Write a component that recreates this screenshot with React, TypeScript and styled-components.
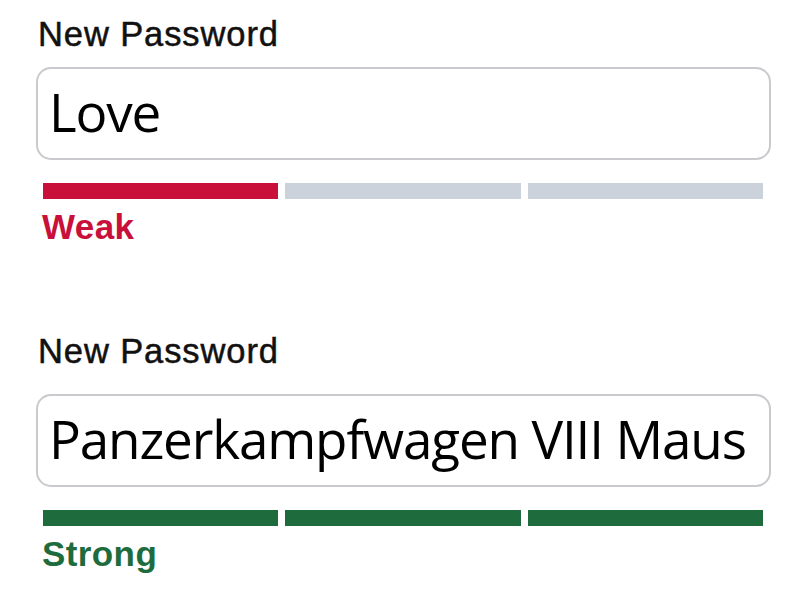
import React from "react";
import styled, { createGlobalStyle } from "styled-components";

const GlobalStyle = createGlobalStyle`
  html, body {
    margin: 0;
    padding: 0;
    background: #ffffff;
  }
`;

type Strength = "weak" | "strong";

const COLORS: Record<Strength, string> = {
  weak: "#c8103a",
  strong: "#1e6c3d",
};

const LEVELS: Record<Strength, number> = {
  weak: 1,
  strong: 3,
};

const Page = styled.div`
  width: 800px;
  height: 600px;
  box-sizing: border-box;
  padding: 16px 29px 0 36px;
  display: flex;
  flex-direction: column;
  gap: 88px;
  font-family: "Liberation Sans", Arial, sans-serif;
`;

const Field = styled.div`
  display: flex;
  flex-direction: column;
`;

const Label = styled.label<{ $gap: number }>`
  display: block;
  font-size: 34.5px;
  line-height: 36px;
  letter-spacing: 0.9px;
  color: #111;
  -webkit-text-stroke: 0.5px #111;
  padding-left: 2px;
  margin-bottom: ${(p) => p.$gap}px;
`;

const Input = styled.input`
  box-sizing: border-box;
  width: 735px;
  height: 93px;
  border: 2px solid #c9c9ce;
  border-radius: 15px;
  padding: 0 0 5px 11px;
  font-family: "Open Sans", "Noto Sans", sans-serif;
  font-size: 53px;
  letter-spacing: -1.15px;
  color: #000;
  background: #fff;
  outline: none;
`;

const Meter = styled.div`
  display: grid;
  grid-template-columns: repeat(3, 1fr);
  gap: 7px;
  margin: 23px 8px 0 7px;
`;

const Segment = styled.div<{ $color: string }>`
  height: 16px;
  background: ${(p) => p.$color};
`;

const Status = styled.div<{ $color: string }>`
  margin-top: 10px;
  padding-left: 6px;
  font-size: 35px;
  line-height: 36px;
  font-weight: 700;
  letter-spacing: 0.4px;
  color: ${(p) => p.$color};
`;

const PasswordField = ({
  value,
  strength,
  labelGap,
}: {
  value: string;
  strength: Strength;
  labelGap: number;
}) => {
  const color = COLORS[strength];
  return (
    <Field>
      <Label $gap={labelGap}>New Password</Label>
      <Input type="text" readOnly defaultValue={value} />
      <Meter>
        {[0, 1, 2].map((i) => (
          <Segment key={i} $color={i < LEVELS[strength] ? color : "#cbd2db"} />
        ))}
      </Meter>
      <Status $color={color}>{strength === "weak" ? "Weak" : "Strong"}</Status>
    </Field>
  );
};

export default function App() {
  return (
    <>
      <GlobalStyle />
      <Page>
        <PasswordField value="Love" strength="weak" labelGap={15} />
        <PasswordField value="Panzerkampfwagen VIII Maus" strength="strong" labelGap={25} />
      </Page>
    </>
  );
}
